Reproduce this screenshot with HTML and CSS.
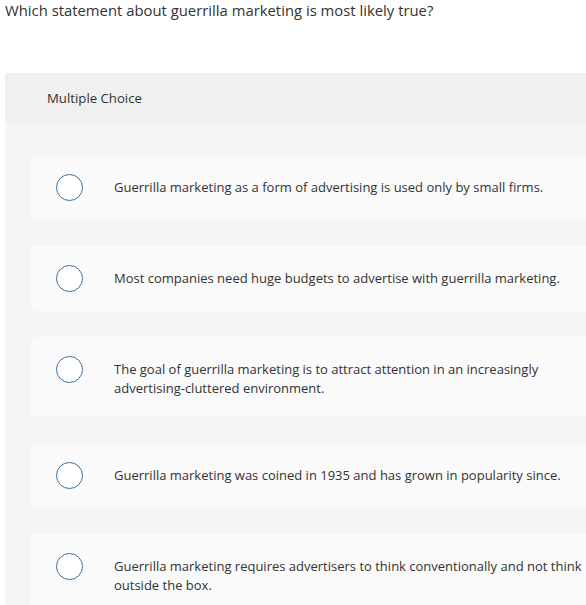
FILE: index.html
```html
<!DOCTYPE html>
<html>
<head>
<meta charset="utf-8">
<link rel="stylesheet" href="styles.css">
</head>
<body>
<div class="page">
  <p class="question">Which statement about guerrilla marketing is most likely true?</p>
  <section class="panel">
    <header class="panel-head">Multiple Choice</header>
    <div class="panel-body">
      <label class="option"><span class="radio"></span><span class="option-text">Guerrilla marketing as a form of advertising is used only by small firms.</span></label>
      <label class="option"><span class="radio"></span><span class="option-text">Most companies need huge budgets to advertise with guerrilla marketing.</span></label>
      <label class="option"><span class="radio"></span><span class="option-text">The goal of guerrilla marketing is to attract attention in an increasingly advertising-cluttered environment.</span></label>
      <label class="option"><span class="radio"></span><span class="option-text">Guerrilla marketing was coined in 1935 and has grown in popularity since.</span></label>
      <label class="option"><span class="radio"></span><span class="option-text">Guerrilla marketing requires advertisers to think conventionally and not think outside the box.</span></label>
    </div>
  </section>
</div>
</body>
</html>
```
FILE: styles.css
```css
html, body {
  margin: 0;
  padding: 0;
  background: #ffffff;
  overflow: hidden;
}
body {
  font-family: "Open Sans", Lato, sans-serif;
  color: #333333;
}
.page {
  width: 640px;
  padding: 0 0 0 5px;
}
.question {
  margin: 0;
  font-size: 14.85px;
  line-height: 20px;
  color: #333333;
}
.panel {
  margin-top: 53px;
  background: #f5f5f5;
}
.panel-head {
  height: 50px;
  box-sizing: border-box;
  padding-left: 42px;
  display: flex;
  align-items: center;
  background: #f0f0f0;
  font-size: 13.2px;
  color: #333333;
}
.panel-body {
  padding: 32px 0 40px 26px;
  display: flex;
  flex-direction: column;
  gap: 26px;
}
.option {
  display: flex;
  align-items: flex-start;
  background: #fafafa;
  border-radius: 3px;
  padding: 19px 0 19px 25px;
}
.radio {
  flex: none;
  width: 27px;
  height: 27px;
  box-sizing: border-box;
  border: 1.5px solid #3d6b98;
  border-radius: 50%;
  background: #ffffff;
}
.option-text {
  margin: 4px 0 0 31px;
  width: 475px;
  font-size: 13px;
  line-height: 19px;
  color: #333333;
}
```
